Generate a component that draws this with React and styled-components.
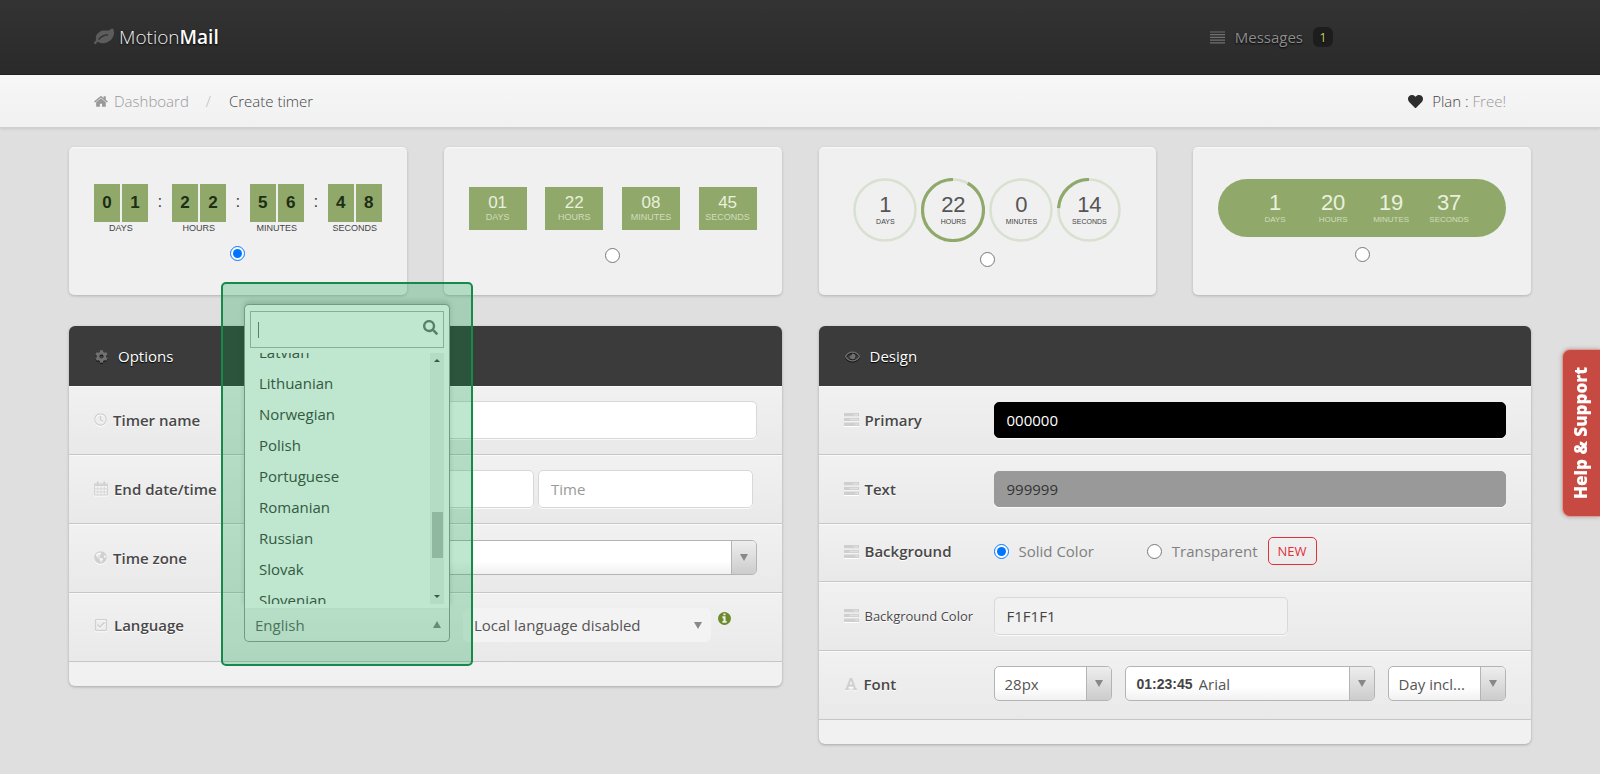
import { useLayoutEffect, useRef } from 'react'
import styled, { createGlobalStyle, css } from 'styled-components'
import { FaHeart, FaCog, FaRegEye, FaRegClock, FaGlobeAmericas, FaRegCheckSquare, FaFont, FaSearch } from 'react-icons/fa'

const color = {
    Page: "#dfdfdf",
    Panel: "#f1f1f1",
    Dark: "#3b3b3b",
    Green: "#90a96a",
    Text: "#444",
    Muted: "#999",
    Icon: "#d0d0d0",
    Red: "#c64a42",
    New: "#e0303a",
}

const openSans = `"Open Sans", "Noto Sans", sans-serif`
const arial = `"Liberation Sans", Arial, sans-serif`

const GlobalStyle = createGlobalStyle`
    * { box-sizing: border-box; }
    body {
        margin: 0;
        background: ${color.Page};
        font: 400 15px/20px ${openSans};
        color: ${color.Text};
    }
    input, select, button { font: inherit; color: inherit; margin: 0; }
    svg { display: block; flex: none; }
`

/* ---------- icons ---------- */

function LeafIcon() {
    return (
        <svg width="20" height="20" viewBox="0 0 1792 1792" fill="currentColor">
            <path d="M1280 704q0-26-19-45t-45-19q-172 0-318 49.5t-259.5 134-235.5 219.5q-19 21-19 45 0 26 19 45t45 19q24 0 45-19 27-24 74-71t67-66q137-124 268.5-176t313.5-52q26 0 45-19t19-45zm512-198q0 95-20 193-46 224-184.5 383t-357.5 268q-214 108-438 108-148 0-286-47-15-5-88-42t-96-37q-16 0-39.5 32t-45 70-52.5 70-60 32q-43 0-63.5-17.5t-45.5-59.5q-2-4-6-11t-5.5-10-3-9.5-1.5-13.5q0-35 31-73.5t68-65.5 68-56 31-48q0-4-14-38t-16-44q-9-51-9-104 0-115 43.5-220t119-184.5 170.5-139 204-95.5q55-18 145-25.5t179.5-9 178.5-6 163.5-24 113.5-56.5l29.5-29.5 29.5-28 27-20 36.5-16 43.5-4.5q39 0 70.5 46t47.5 112 24 124 8 96z" />
        </svg>
    )
}

function ListIcon() {
    return (
        <svg width="15" height="13" viewBox="0 0 15 13" stroke="currentColor" strokeWidth="1.200">
            <path d="M0 1h15M0 3.700h15M0 6.400h15M0 9.100h15M0 11.800h15" />
        </svg>
    )
}

function HomeIcon() {
    return (
        <svg width="15" height="15" viewBox="0 0 1792 1792" fill="currentColor">
            <path d="M1408 992v480q0 26-19 45t-45 19h-384v-384h-256v384h-384q-26 0-45-19t-19-45v-480q0-1 .5-3t.5-3l575-474 575 474q1 2 1 6zm223-69l-62 74q-8 9-21 11h-3q-13 0-21-7l-692-577-692 577q-12 8-24 7-13-2-21-11l-62-74q-8-10-7-23.5t11-21.5l719-599q32-26 76-26t76 26l244 204v-195q0-14 9-23t23-9h192q14 0 23 9t9 23v408l219 182q10 8 11 21.5t-7 23.5z" />
        </svg>
    )
}

function InfoIcon() {
    return (
        <svg width="15" height="15" viewBox="0 0 1792 1792" fill="currentColor">
            <path d="M1152 1376v-160q0-14-9-23t-23-9h-96v-512q0-14-9-23t-23-9h-320q-14 0-23 9t-9 23v160q0 14 9 23t23 9h96v320h-96q-14 0-23 9t-9 23v160q0 14 9 23t23 9h448q14 0 23-9t9-23zm-128-896v-160q0-14-9-23t-23-9h-192q-14 0-23 9t-9 23v160q0 14 9 23t23 9h192q14 0 23-9t9-23zm640 416q0 209-103 385.5t-279.5 279.5-385.5 103-385.5-103-279.5-279.5-103-385.5 103-385.5 279.5-279.5 385.5-103 385.5 103 279.5 279.5 103 385.5z" />
        </svg>
    )
}

function CalendarIcon() {
    return (
        <svg width="14" height="15" viewBox="0 0 15 15" fill="none" stroke="currentColor">
            <path d="M.5 2.500h14v12H.5z" />
            <path d="M.5 4h14" strokeWidth="2" />
            <path d="M.5 8h14M.5 11.300h14M4 5v9.500M7.500 5v9.500M11 5v9.500" strokeWidth=".8" />
            <path d="M4 0v3.500M11 0v3.500" strokeWidth="2" />
        </svg>
    )
}

function TasksIcon() {
    return (
        <svg width="15" height="13" viewBox="0 0 16 13" preserveAspectRatio="none">
            <path fill="#cfcfcf" d="M0 0h16v3.400H0zM0 4.800h16v3.400H0zM0 9.600h16v3.400H0z" />
            <path fill="#e0e0e0" d="M10 1h5v1.400h-5zM6 5.800h9v1.400H6zM12 10.600h3v1.400h-3z" />
        </svg>
    )
}

/* ---------- header ---------- */

const Navbar = styled.header`
    height: 75px;
    padding: 0 94px;
    display: flex;
    align-items: center;
    justify-content: space-between;
    background: linear-gradient(#333, #2a2a2a);
    border-bottom: 1px solid #222;
`

const Logo = styled.a`
    display: flex;
    align-items: center;
    gap: 5px;
    font-size: 19px;
    line-height: 28px;
    font-weight: 300;
    color: #f2f2f2;
    text-decoration: none;
    text-shadow: 0 1px 2px #000;
    svg { color: #5c5c5c; }
    b { font-weight: 600; color: #fff; }
`

const Messages = styled.a`
    display: flex;
    align-items: center;
    margin-right: 173px;
    color: #8c8c8c;
    text-decoration: none;
    text-shadow: 0 1px 2px #000;
    svg { color: #707070; margin-right: 10px; }
`

const Count = styled.span`
    width: 20px;
    margin-left: 10px;
    border-radius: 6px;
    background: #1d1d1d;
    color: #c5c85c;
    font-size: 13px;
    text-align: center;
`

const Breadcrumb = styled.nav`
    height: 53px;
    padding: 0 94px;
    display: flex;
    align-items: center;
    font-weight: 300;
    background: linear-gradient(#f7f7f7, #f1f1f1);
    border-bottom: 1px solid #cfcfcf;
    box-shadow: 0 1px 3px rgba(0, 0, 0, .1);
`

const Crumb = styled.a`
    display: flex;
    gap: 5px;
    align-items: center;
    color: #999;
    text-decoration: none;
`

const Slash = styled.span`
    margin: 0 18px 0 17px;
    color: #bbb;
`

const Plan = styled.span`
    display: flex;
    align-items: center;
    gap: 9px;
    margin-left: auto;
    svg { color: #2e2e2e; }
    a { color: #999; text-decoration: none; }
`

/* ---------- timer styles ---------- */

const Main = styled.main`
    padding: 19px 69px 30px;
    display: grid;
    gap: 31px;
`

const Cards = styled.div`
    display: grid;
    grid-template-columns: repeat(4, 1fr);
    column-gap: 37px;
`

const Card = styled.label`
    height: 148px;
    padding-top: ${p => p.$top}px;
    display: flex;
    flex-direction: column;
    align-items: center;
    gap: ${p => p.$gap}px;
    background: #f0f0f0;
    border-radius: 5px;
    border-top: 1px solid #fafafa;
    box-shadow: 0 1px 3px rgba(0, 0, 0, .2);
    font-family: ${arial};
`

const Radio = styled.input.attrs({ type: "radio" })`
    width: 15px;
    height: 15px;
    flex: none;
`

const Timer = styled.div`
    width: 288px;
    display: flex;
    justify-content: ${p => p.$center ? "center" : "space-between"};
    gap: ${p => p.$gap || 0}px;
`

const Pill = styled(Timer)`
    height: 58px;
    align-items: center;
    border-radius: 29px;
    background: ${color.Green};
`

const Unit = styled.div`
    display: grid;
    justify-items: center;
    align-content: center;
    width: ${p => p.$width}px;
`

const Flip = styled.div`
    display: flex;
    gap: 2px;
    margin-bottom: 1px;
    span {
        width: 26px;
        height: 38px;
        background: ${color.Green};
        font-size: 17px;
        font-weight: 700;
        line-height: 38px;
        text-align: center;
        color: #1e2e14;
    }
`

const Colon = styled.span`
    font-size: 17px;
    line-height: 36px;
    color: #444;
`

const Block = styled(Unit)`
    height: 43px;
    background: ${color.Green};
`

const Value = styled.span`
    font-size: ${p => p.$size}px;
    line-height: ${p => p.$size + 1}px;
    color: ${p => p.$light ? "#e9f0dd" : "#555"};
`

const Caption = styled.span`
    font-size: ${p => p.$size || 9}px;
    line-height: 11px;
    color: ${p => p.$light ? "#d0dcbc" : "#444"};
`

const Ring = styled.div`
    display: grid;
    place-items: center;
    > * { grid-area: 1 / 1; }
`

const units = ["DAYS", "HOURS", "MINUTES", "SECONDS"]

function FlipTimer() {
    return (
        <Timer>
            {["01", "22", "56", "48"].map((value, i) => [
                i > 0 && <Colon key={"colon" + i}>:</Colon>,
                <Unit key={i} $width={54}>
                    <Flip><span>{value[0]}</span><span>{value[1]}</span></Flip>
                    <Caption>{units[i]}</Caption>
                </Unit>
            ])}
        </Timer>
    )
}

function BlockTimer() {
    return (
        <Timer>
            {["01", "22", "08", "45"].map((value, i) => (
                <Block key={i} $width={58}>
                    <Value $size={17} $light>{value}</Value>
                    <Caption $light>{units[i]}</Caption>
                </Block>
            ))}
        </Timer>
    )
}

function RingTimer() {
    // share of each ring that is filled, counted back from the top
    const rings = [["1", 0], ["22", 0.92], ["0", 0], ["14", 0.24]]
    return (
        <Timer $center $gap={4}>
            {rings.map(([value, part], i) => (
                <Ring key={i}>
                    <svg width="64" height="64" viewBox="0 0 64 64" fill="none">
                        <circle cx="32" cy="32" r="30.500" stroke="#d8e0d0" strokeWidth="2.500" />
                        {part > 0 && (
                            <circle cx="32" cy="32" r="30.500" stroke={color.Green} strokeWidth="3.200" pathLength="1"
                                strokeDasharray={`${part} 1`} transform="matrix(0 -1 -1 0 64 64)" />
                        )}
                    </svg>
                    <Unit>
                        <Value $size={22}>{value}</Value>
                        <Caption $size={7}>{units[i]}</Caption>
                    </Unit>
                </Ring>
            ))}
        </Timer>
    )
}

function PillTimer() {
    return (
        <Pill $center>
            {["1", "20", "19", "37"].map((value, i) => (
                <Unit key={i} $width={58}>
                    <Value $size={22} $light>{value}</Value>
                    <Caption $size={8} $light>{units[i]}</Caption>
                </Unit>
            ))}
        </Pill>
    )
}

/* ---------- panels ---------- */

const Panels = styled.div`
    display: grid;
    grid-template-columns: 1fr 1fr;
    column-gap: 37px;
    align-items: start;
`

const Panel = styled.section`
    background: ${color.Panel};
    border-radius: 6px;
    box-shadow: 0 1px 3px rgba(0, 0, 0, .25);
    padding-bottom: 24px;
`

const PanelTitle = styled.h2`
    margin: 0;
    height: 60px;
    padding: 0 26px;
    display: flex;
    align-items: center;
    gap: 10px;
    border-radius: 6px 6px 0 0;
    background: ${color.Dark};
    color: #fff;
    font-size: 15px;
    font-weight: 400;
    text-shadow: 0 1px 1px #000;
    svg { color: #707070; filter: drop-shadow(0 1px 0 #111); }
`

const Row = styled.div`
    height: ${p => p.$short ? 58 : 69}px;
    padding: 0 25px ${p => p.$lift || 1}px;
    display: flex;
    align-items: center;
    background: linear-gradient(#f1f1f1, #e9e9e9);
    border-bottom: 1px solid #c6c6c6;
    box-shadow: inset 0 1px 0 #fafafa;
`

const Label = styled.label`
    width: 150px;
    flex: none;
    display: flex;
    align-items: center;
    gap: 6px;
    font-size: ${p => p.$small ? 13 : 15}px;
    font-weight: ${p => p.$small ? 500 : 600};
    white-space: nowrap;
    color: #484848;
    text-shadow: 0 1px 0 #fff;
    svg { color: ${color.Icon}; filter: drop-shadow(0 1px 0 #fff); }
`

const Fields = styled.div`
    flex: 1;
    min-width: 0;
    display: flex;
    align-items: center;
    gap: ${p => p.$gap || 0}px;
`

const TextInput = styled.input`
    width: 100%;
    max-width: ${p => p.$max ? p.$max + "px" : "none"};
    height: 38px;
    padding: 0 12px;
    border: 1px solid #d8d8d8;
    border-radius: 5px;
    background: ${p => p.$fill || "#fff"};
    color: ${p => p.$ink || color.Text};
    box-shadow: 0 1px 0 #fafafa;
    outline: none;
    &::placeholder { color: ${color.Muted}; opacity: 1; }
    ${p => p.$swatch && css`
        height: 36px;
        border-color: ${p.$fill};
    `}
`

const SelectBox = styled.div`
    width: ${p => p.$width ? p.$width + "px" : "100%"};
    height: 35px;
    display: flex;
    align-items: center;
    position: relative;
    border: 1px solid #b4b4b4;
    border-radius: 5px;
    background: linear-gradient(#fff 60%, #f1f1f1);
    color: #555;
    overflow: hidden;
    select {
        flex: 1;
        min-width: 0;
        height: 33px;
        padding: 0 0 0 10px;
        appearance: none;
        border: 0;
        background: none;
        outline: none;
    }
    ${p => p.$plain && css`
        height: 34px;
        border-color: #f3f3f3;
        background: #f3f3f3;
    `}
`

const Arrow = styled.span`
    width: 25px;
    align-self: stretch;
    display: grid;
    place-items: center;
    pointer-events: none;
    ${p => !p.$plain && css`
        border-left: 1px solid #b4b4b4;
        background: linear-gradient(#eee, #ccc);
    `}
    &::before {
        content: "";
        border: 4px solid transparent;
        border-width: ${p => p.$up ? "0 4px 7px" : "7px 4px 0"};
        border-${p => p.$up ? "bottom" : "top"}-color: #888;
    }
`

const Sample = styled.b`
    margin: 0 -4px 0 11px;
    font: 700 14px/20px ${arial};
    color: #444;
`

const Choice = styled.label`
    display: flex;
    align-items: center;
    gap: 10px;
    margin-right: ${p => p.$space}px;
    color: #808080;
`

const NewBadge = styled.span`
    padding: 3px 9px;
    border: 1px solid ${color.New};
    border-radius: 5px;
    color: ${color.New};
    font-size: 13px;
`

const Info = styled.span`
    align-self: flex-start;
    margin: 3px 0 0 6px;
    color: #6d8b2c;
`

function Select({ id, width, plain, sample, label, value }) {
    return (
        <SelectBox $width={width} $plain={plain}>
            {sample && <Sample>{sample}</Sample>}
            <select id={id} aria-label={label} defaultValue={value}>
                <option value={value}>{value}</option>
            </select>
            <Arrow $plain={plain} />
        </SelectBox>
    )
}

/* ---------- language drop-down ---------- */

const Language = styled.div`
    position: relative;
    width: 206px;
    flex: none;
    margin-right: 13px;
`

const LanguageButton = styled.button`
    width: 100%;
    height: 34px;
    padding: 0 0 0 10px;
    display: flex;
    align-items: center;
    justify-content: space-between;
    border: 1px solid #999;
    border-top: 0;
    border-radius: 0 0 5px 5px;
    background: linear-gradient(#f4f4f4, #efefef);
    color: #666;
`

const Drop = styled.div`
    position: absolute;
    z-index: 1;
    bottom: 34px;
    left: 0;
    width: 100%;
    padding: 6px 5px 4px;
    border: 1px solid #999;
    border-bottom: 0;
    border-radius: 5px 5px 0 0;
    background: #fff;
    box-shadow: 0 -3px 5px rgba(0, 0, 0, .15);
`

const Search = styled.div`
    height: 37px;
    margin-bottom: 5px;
    padding: 0 5px 0 7px;
    display: flex;
    align-items: center;
    border: 1px solid #b4b4b4;
    input {
        flex: 1;
        min-width: 0;
        padding: 0;
        border: 0;
        background: none;
        outline: none;
    }
    svg { color: #777; margin-bottom: 4px; }
`

const Caret = styled.span`
    width: 1px;
    height: 16px;
    background: #777;
`

const ListArea = styled.div`
    display: flex;
    height: 251px;
`

const List = styled.ul`
    flex: 1;
    margin: 0;
    padding: 0;
    overflow: auto;
    scrollbar-width: none;
    list-style: none;
    li {
        padding: 0 9px;
        line-height: 31px;
    }
`

const Scrollbar = styled.div`
    width: 14px;
    padding: 6px 1px;
    display: flex;
    flex-direction: column;
    align-items: center;
    background: #f1f1f1;
    &::before, &::after {
        content: "";
        border: 3px solid transparent;
    }
    &::before { border-top-width: 0; border-bottom-color: #444; }
    &::after { border-bottom-width: 0; border-top-color: #444; }
`

const Thumb = styled.span`
    width: 11px;
    height: 46px;
    margin: auto 0 37px;
    background: #c1c1c1;
`

const Highlight = styled.div`
    position: absolute;
    z-index: 2;
    inset: -326px -23px -24px -23px;
    border: 2px solid #158a4c;
    border-radius: 5px;
    background: rgba(0, 157, 60, .25);
    pointer-events: none;
`

const languages = ["Latvian", "Lithuanian", "Norwegian", "Polish", "Portuguese", "Romanian", "Russian", "Slovak", "Slovenian"]

function LanguageSelect() {
    const list = useRef(null)

    useLayoutEffect(() => {
        list.current.scrollTop = 16
    }, [])

    return (
        <Language>
            <Drop>
                <Search>
                    <Caret />
                    <input type="text" aria-label="Search language" />
                    <FaSearch size={15} />
                </Search>
                <ListArea>
                    <List ref={list} role="listbox" aria-label="Languages">
                        {languages.map(name => <li key={name} role="option" aria-selected="false">{name}</li>)}
                    </List>
                    <Scrollbar><Thumb /></Scrollbar>
                </ListArea>
            </Drop>
            <LanguageButton id="language" type="button" aria-expanded="true">
                English
                <Arrow $plain $up />
            </LanguageButton>
            <Highlight />
        </Language>
    )
}

const HelpTab = styled.button`
    position: fixed;
    top: 349px;
    right: 0;
    width: 38px;
    height: 168px;
    padding: 0;
    border: 1px solid #e59a95;
    border-left-width: 0;
    border-radius: 0 8px 8px 0;
    background: ${color.Red};
    box-shadow: 0 0 4px rgba(0, 0, 0, .25);
    color: #fff;
    font-size: 17px;
    font-weight: 800;
    line-height: 36px;
    writing-mode: vertical-rl;
    transform: rotate(180deg);
`

export default function App() {
    return (
        <>
            <GlobalStyle />
            <Navbar>
                <Logo href="#"><LeafIcon /><span>Motion<b>Mail</b></span></Logo>
                <Messages href="#"><ListIcon />Messages<Count>1</Count></Messages>
            </Navbar>
            <Breadcrumb>
                <Crumb href="#"><HomeIcon />Dashboard</Crumb>
                <Slash>/</Slash>
                <span>Create timer</span>
                <Plan><FaHeart size={15} /><span>Plan : <a href="#">Free!</a></span></Plan>
            </Breadcrumb>
            <Main>
                <Cards>
                    <Card $top={36} $gap={12}><FlipTimer /><Radio name="style" defaultChecked /></Card>
                    <Card $top={39} $gap={18}><BlockTimer /><Radio name="style" /></Card>
                    <Card $top={30} $gap={10}><RingTimer /><Radio name="style" /></Card>
                    <Card $top={31} $gap={10}><PillTimer /><Radio name="style" /></Card>
                </Cards>
                <Panels>
                    <Panel>
                        <PanelTitle><FaCog size={13} />Options</PanelTitle>
                        <Row>
                            <Label htmlFor="name"><FaRegClock size={13} />Timer name</Label>
                            <Fields><TextInput id="name" type="text" /></Fields>
                        </Row>
                        <Row>
                            <Label htmlFor="date"><CalendarIcon />End date/time</Label>
                            <Fields $gap={4}>
                                <TextInput id="date" type="text" $max={290} />
                                <TextInput type="text" aria-label="Time" placeholder="Time" $max={215} />
                            </Fields>
                        </Row>
                        <Row>
                            <Label htmlFor="zone"><FaGlobeAmericas size={13} />Time zone</Label>
                            <Fields><Select id="zone" value="" /></Fields>
                        </Row>
                        <Row $lift={4}>
                            <Label htmlFor="language"><FaRegCheckSquare size={14} />Language</Label>
                            <Fields>
                                <LanguageSelect />
                                <Select width={248} plain label="Local language" value="Local language disabled" />
                                <Info><InfoIcon /></Info>
                            </Fields>
                        </Row>
                    </Panel>
                    <Panel>
                        <PanelTitle><FaRegEye size={15} />Design</PanelTitle>
                        <Row>
                            <Label htmlFor="primary"><TasksIcon />Primary</Label>
                            <Fields><TextInput id="primary" type="text" defaultValue="000000" $swatch $fill="#000" $ink="#fff" /></Fields>
                        </Row>
                        <Row>
                            <Label htmlFor="text"><TasksIcon />Text</Label>
                            <Fields><TextInput id="text" type="text" defaultValue="999999" $swatch $fill="#999" $ink="#333" /></Fields>
                        </Row>
                        <Row $short $lift={3}>
                            <Label as="span"><TasksIcon />Background</Label>
                            <Fields>
                                <Choice $space={53}><Radio name="background" defaultChecked />Solid Color</Choice>
                                <Choice $space={10}><Radio name="background" />Transparent</Choice>
                                <NewBadge>NEW</NewBadge>
                            </Fields>
                        </Row>
                        <Row>
                            <Label htmlFor="bgcolor" $small><TasksIcon />Background Color</Label>
                            <Fields><TextInput id="bgcolor" type="text" defaultValue="F1F1F1" $fill="#f1f1f1" $max={294} /></Fields>
                        </Row>
                        <Row $lift={3}>
                            <Label htmlFor="size"><FaFont size={14} />Font</Label>
                            <Fields $gap={13}>
                                <Select id="size" width={118} value="28px" />
                                <Select width={250} label="Font family" sample="01:23:45" value="Arial" />
                                <Select width={118} label="Day label" value="Day incl..." />
                            </Fields>
                        </Row>
                    </Panel>
                </Panels>
            </Main>
            <HelpTab type="button">Help &amp; Support</HelpTab>
        </>
    )
}
